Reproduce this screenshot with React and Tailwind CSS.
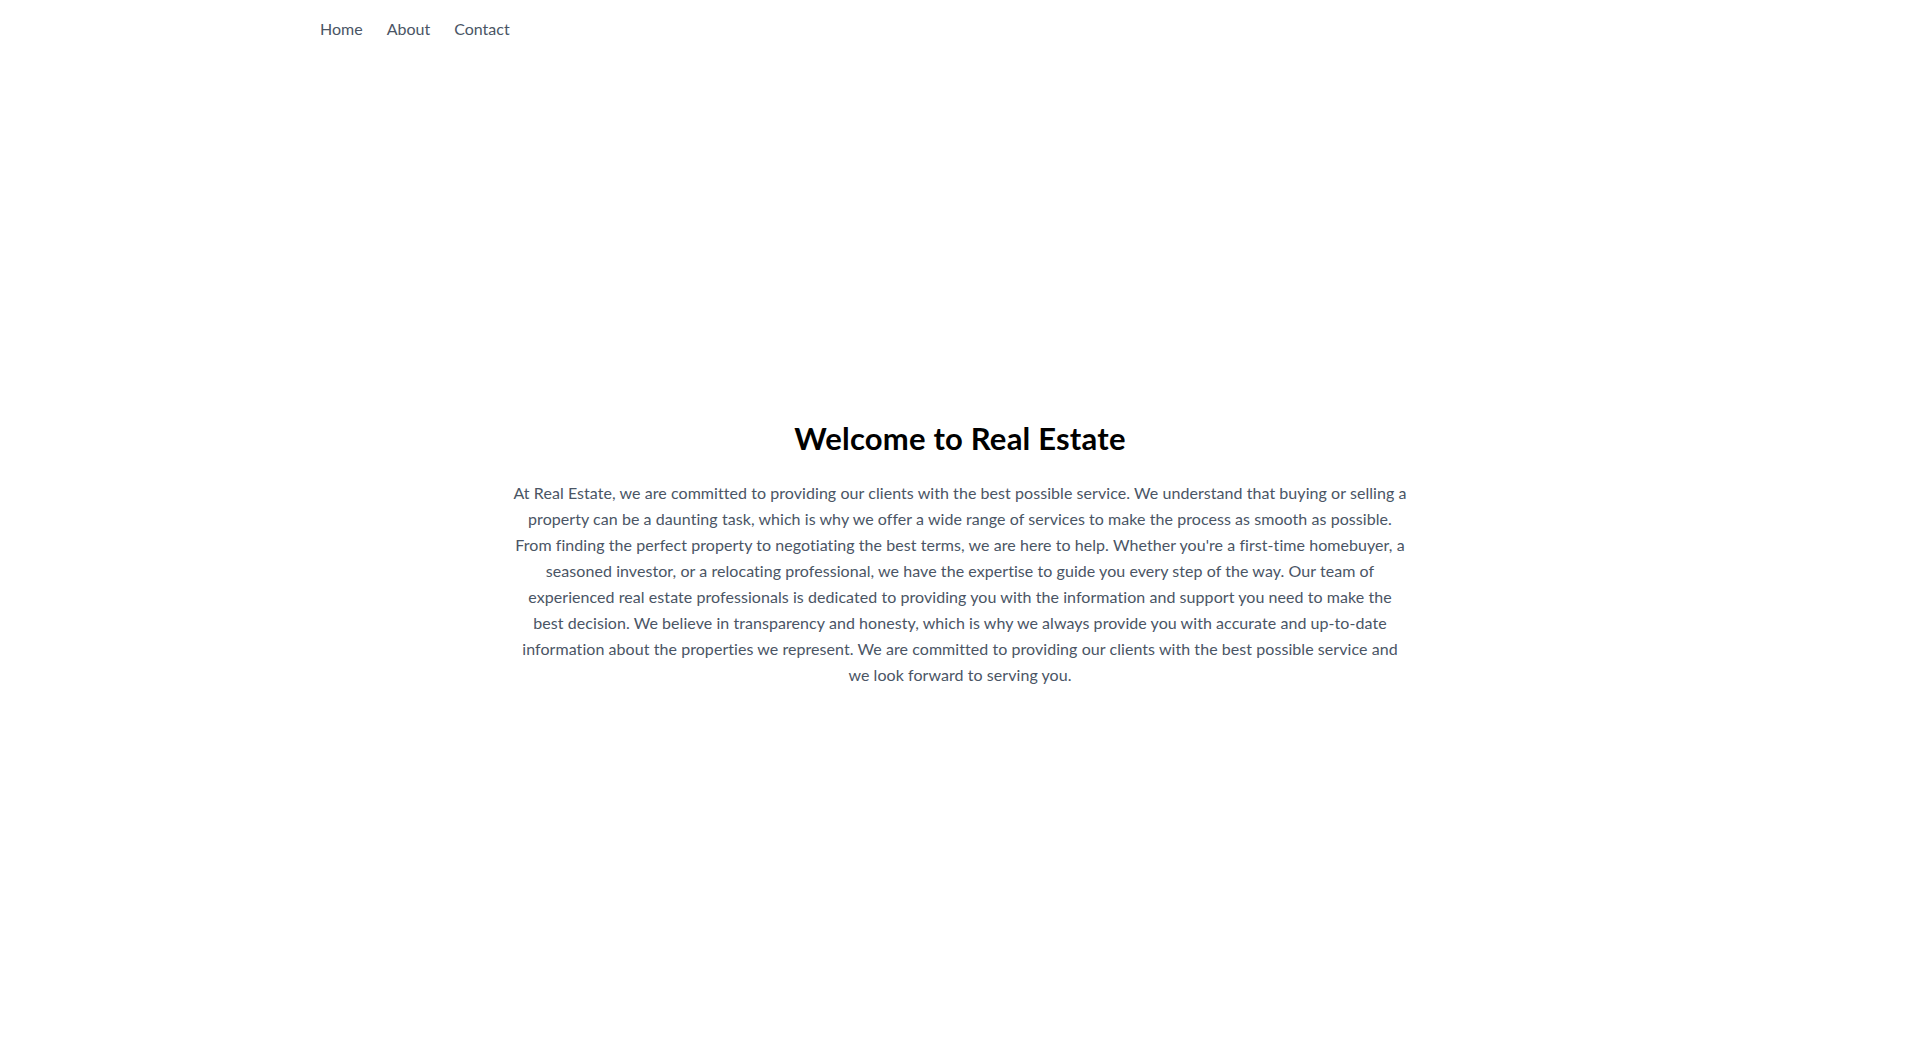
import React from 'react';

const App = () => {
  return (
    <div className="flex h-screen flex-col bg-white font-['Lato','Open_Sans',sans-serif]">
      {/* Nav */}
      <nav className="mx-auto w-full max-w-7xl pt-[17px] pb-[15px]">
        <ul className="flex space-x-6 text-base text-gray-600">
          <li><a href="#">Home</a></li>
          <li><a href="#">About</a></li>
          <li><a href="#">Contact</a></li>
        </ul>
      </nav>

      {/* Hero */}
      <main className="flex flex-1 items-center justify-center px-4">
        <div className="max-w-4xl text-center">
          <h1 className="mb-6 text-[31px] leading-9 font-bold tracking-[0.2px] text-black">Welcome to Real Estate</h1>
          <p className="text-base leading-relaxed tracking-[0.06px] text-gray-600">
            At Real Estate, we are committed to providing our clients with the best possible service. We understand that buying or selling a property can be a daunting task, which is why we offer a wide range of services to make the process as smooth as possible. From finding the perfect property to negotiating the best terms, we are here to help. Whether you're a first-time homebuyer, a seasoned investor, or a relocating professional, we have the expertise to guide you every step of the way. Our team of experienced real estate professionals is dedicated to providing you with the information and support you need to make the best decision. We believe in transparency and honesty, which is why we always provide you with accurate and up-to-date information about the properties we represent. We are committed to providing our clients with the best possible service and we look forward to serving you.
          </p>
        </div>
      </main>
    </div>
  );
};

export default App;
